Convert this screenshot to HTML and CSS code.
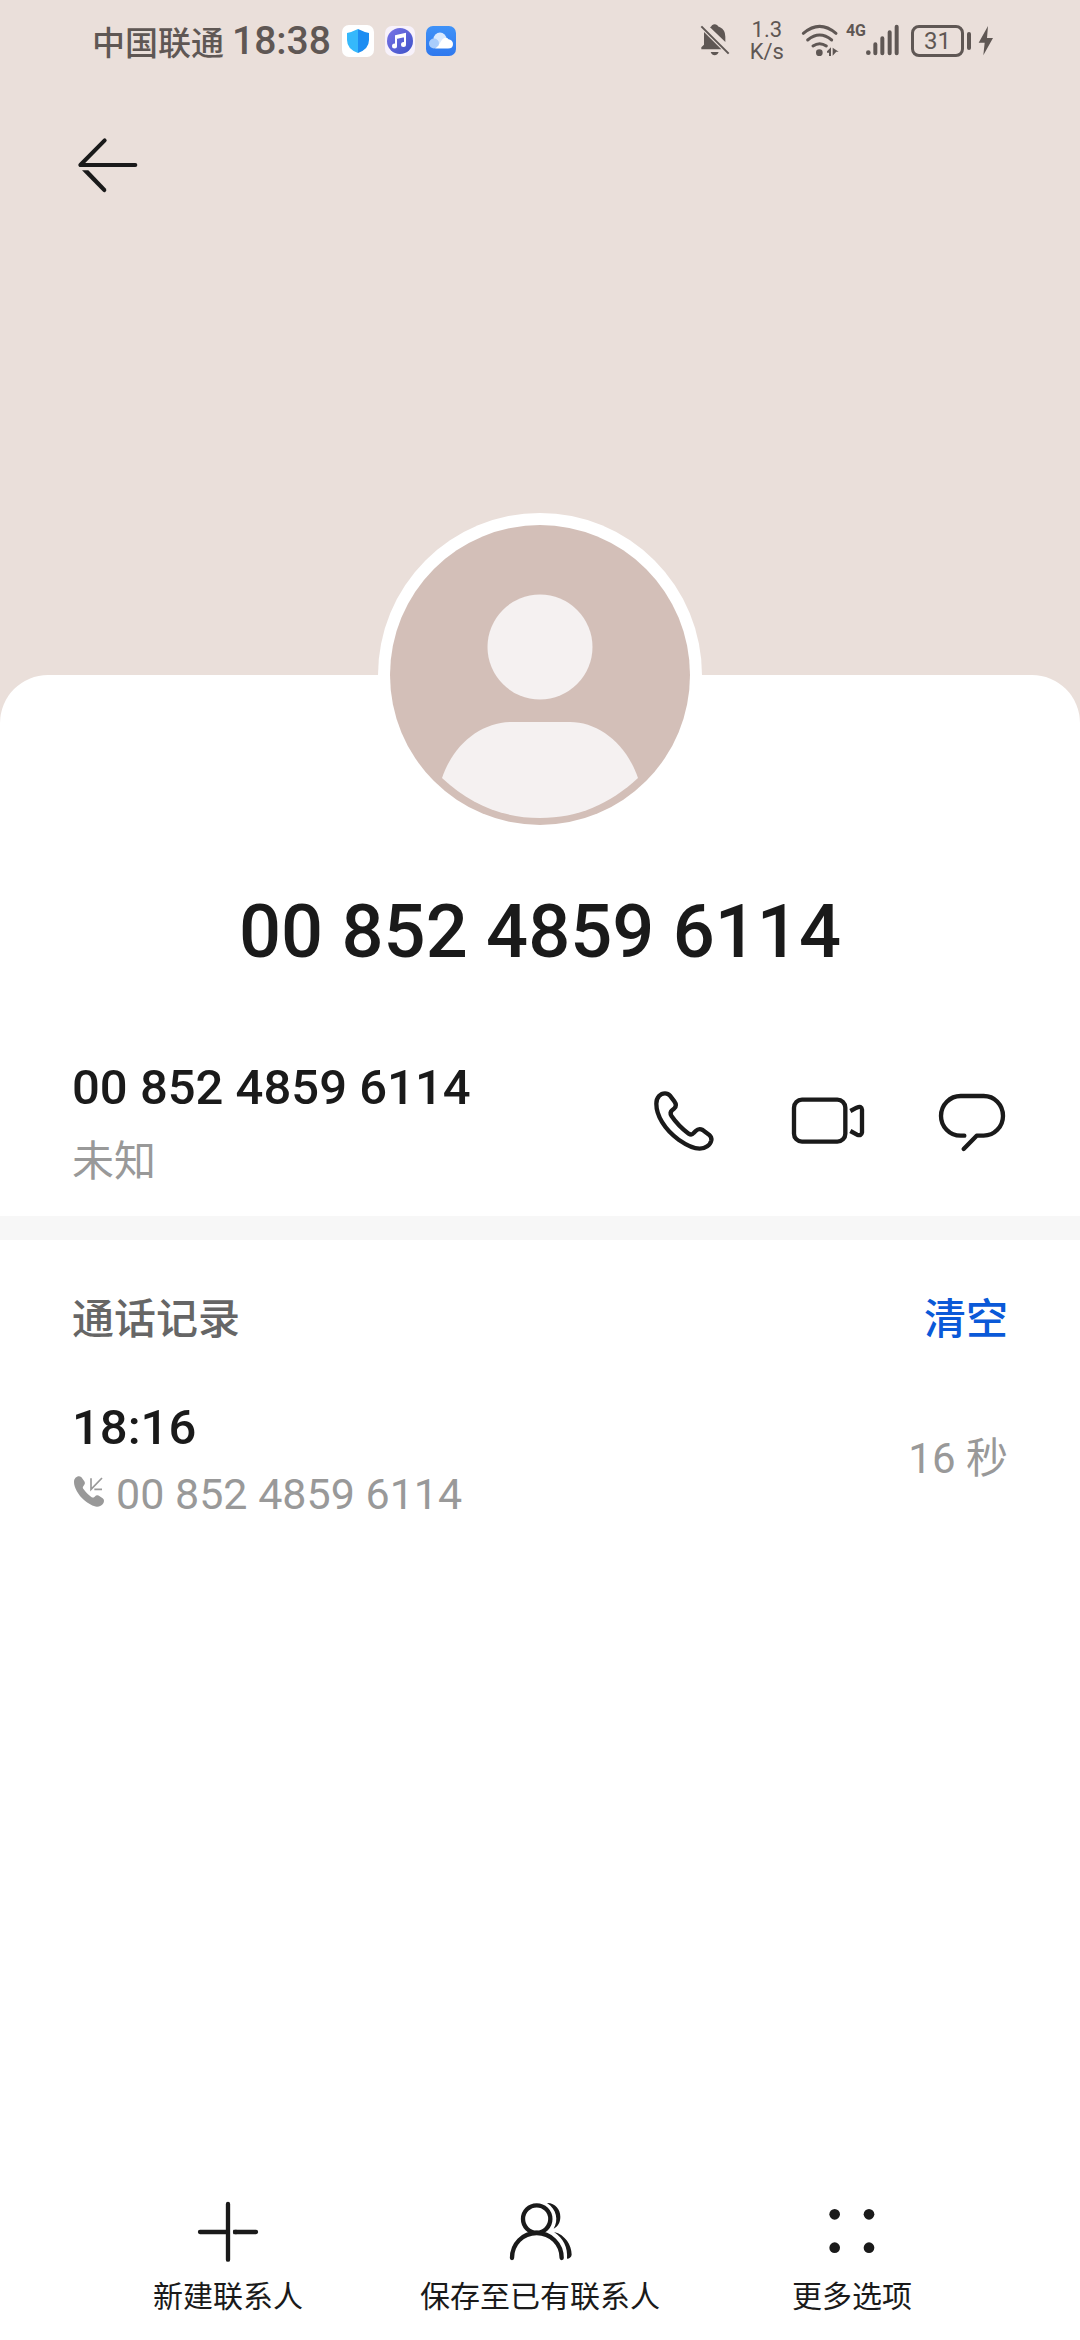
FILE: index.html
```html
<!DOCTYPE html>
<html lang="zh-CN">
<head>
<meta charset="utf-8">
<meta name="viewport" content="width=device-width, initial-scale=1">
<title>00 852 4859 6114</title>
<link rel="stylesheet" href="styles.css">
</head>
<body>
<header class="hero">
  <div class="status">
    <div class="status-left">
      <span class="carrier">中国联通</span>
      <time class="clock">18:38</time>
      <span class="apps">
        <svg width="32" height="32" viewBox="0 0 32 32" aria-hidden="true">
          <rect width="32" height="32" rx="7" fill="#fff"/>
          <path d="M16 4Q10 7 5 8V15Q5 24 16 28Z" fill="#35b8fb"/>
          <path d="M16 4Q22 7 27 8V15Q27 24 16 28Z" fill="#1d8df2"/>
        </svg>
        <svg width="30" height="30" viewBox="0 0 30 30" aria-hidden="true">
          <defs><linearGradient id="music" x1="0" y1="0" x2="1" y2="1"><stop offset="0" stop-color="#7a74e6"/><stop offset="1" stop-color="#3d52c8"/></linearGradient></defs>
          <rect width="30" height="30" rx="7" fill="#f8f2fb"/>
          <circle cx="15" cy="15" r="13" fill="url(#music)"/>
          <path d="M11 20V10L20 8V18M11 12L20 10" fill="none" stroke="#fff" stroke-width="2"/>
          <circle cx="9.500" cy="20" r="2.500" fill="#fff"/><circle cx="18.500" cy="18.500" r="2.500" fill="#fff"/>
        </svg>
        <svg width="30" height="30" viewBox="0 0 30 30" aria-hidden="true">
          <defs><linearGradient id="sky" x1="0" y1="0" x2="0" y2="1"><stop offset="0" stop-color="#3f92f8"/><stop offset="1" stop-color="#2f78ee"/></linearGradient></defs>
          <rect width="30" height="30" rx="7" fill="url(#sky)"/>
          <circle cx="14" cy="13" r="6.500" fill="#d9e9fe"/>
          <circle cx="8" cy="17.500" r="5" fill="#a9cdfc"/>
          <path d="M9 22.500Q12 21 14 17Q17 11 21 12Q22 12 22 13Q27 14 27 18Q27 22.500 22 22.500Z" fill="#fff"/>
        </svg>
      </span>
    </div>
    <div class="status-right">
      <svg class="bell" width="30" height="34" viewBox="0 0 90 102" aria-hidden="true">
        <path d="M12 24L64 76H4V70L12 62ZM30 10Q34 8 36 4Q44-3 52 4Q54 8 60 10Q76 18 76 38V54ZM32 84H56Q52 94 44 94Q36 94 32 84Z"/>
        <path d="M4 7L86 89" fill="none" stroke="currentColor" stroke-width="6"/>
      </svg>
      <span class="speed"><span>1.3</span><span>K/s</span></span>
      <svg class="wifi" width="40" height="34" viewBox="0 0 120 102" aria-hidden="true">
        <path d="M7 28Q56-14 105 28M20 48Q56 18 92 48M36 66Q56 52 76 66" fill="none" stroke="currentColor" stroke-width="9" stroke-linecap="round"/>
        <circle cx="55" cy="86" r="10"/>
        <path d="M78 82L90 70V96H84V86H78ZM95 71L113 83H106L95 95Z"/>
      </svg>
      <span class="network">4G</span>
      <svg class="signal" width="34" height="34" viewBox="0 0 102 102" aria-hidden="true">
        <circle cx="7" cy="86" r="7"/>
        <path d="M28 61V88M49 43V88M71 25V88M92 8V88" fill="none" stroke="currentColor" stroke-width="12" stroke-linecap="round"/>
      </svg>
      <span class="battery">31</span>
      <svg class="nub" width="4" height="18" viewBox="0 0 4 18" aria-hidden="true"><rect width="4" height="18" rx="2"/></svg>
      <svg class="bolt" width="16" height="30" viewBox="0 0 48 90" aria-hidden="true"><path d="M30 0L2 50H20L16 88L45 36H27Z"/></svg>
    </div>
  </div>
  <button class="back" type="button" aria-label="返回">
    <svg width="64" height="64" viewBox="48 38 192 192" aria-hidden="true">
      <path d="M134 60L61 134H226" fill="none" stroke="currentColor" stroke-width="12" stroke-linecap="round" stroke-linejoin="round"/>
      <path d="M66 150H85L138 205Q141 211 136 215Q132 217 128 213Z" fill="currentColor"/>
    </svg>
  </button>
</header>

<main class="card">
  <svg class="avatar" width="324" height="324" viewBox="0 0 324 324" aria-hidden="true">
    <circle cx="162" cy="162" r="162" fill="#fff"/>
    <circle cx="162" cy="162" r="150" fill="#d3bfb8"/>
    <circle cx="162" cy="134" r="52.500" fill="#f5f1f1"/>
    <path d="M134 209H192C220 209 248 230 260 265C232 291 200 305 162 305C124 305 92 291 64 265C76 230 104 209 134 209Z" fill="#f5f1f1"/>
  </svg>
  <h1 class="title">00 852 4859 6114</h1>

  <section class="contact">
    <div class="contact-text">
      <p class="number">00 852 4859 6114</p>
      <p class="place">未知</p>
    </div>
    <div class="actions">
      <button type="button" aria-label="呼叫">
        <svg width="64" height="64" viewBox="72 54 192 192" aria-hidden="true">
          <path class="line" d="M79 98C79 78 92 67 105 67C111 67 116 69 120 74L133 91C139 99 139 106 133 112L126 118C121 123 121 129 124 134C139 156 156 173 176 188C182 192 187 191 191 186L197 180C203 174 211 173 218 177L237 191C243 196 245 202 244 208C241 222 226 233 209 233C194 233 172 224 146 206C103 175 79 133 79 98Z"/>
        </svg>
      </button>
      <button type="button" aria-label="视频通话">
        <svg width="76" height="64" viewBox="480 54 228 192" aria-hidden="true">
          <rect class="line" x="492" y="86" width="154" height="126" rx="24"/>
          <path class="line flat" d="M661 120L680 110Q695 103 696 116V184Q694 196 681 191L661 180"/>
        </svg>
      </button>
      <button type="button" aria-label="发信息">
        <svg width="70" height="64" viewBox="924 54 210 192" aria-hidden="true">
          <path class="line" d="M1003 194H992C958 194 933 166 933 135C933 101 960 75 992 75H1061C1093 75 1119 101 1119 135C1119 167 1093 194 1061 194H1040L1001 234"/>
        </svg>
      </button>
    </div>
  </section>

  <section class="history">
    <div class="history-head">
      <h2>通话记录</h2>
      <button class="clear" type="button">清空</button>
    </div>
    <div class="call">
      <div>
        <time class="call-time">18:16</time>
        <p class="call-number">
          <svg width="32" height="32" viewBox="39 832 96 96" aria-hidden="true">
            <path d="M45 844C45 834 52 827 60 827C65 827 68 830 71 835L76 842C79 847 78 851 74 855C70 859 71 862 74 866C81 876 88 883 97 889C101 892 104 891 107 888C112 883 117 883 122 887L131 893C136 897 136 903 133 908C129 915 122 918 114 918C103 918 87 908 75 898C58 883 45 861 45 844Z" fill="currentColor"/>
            <path d="M96 833V866L129 832M106 866H129" fill="none" stroke="currentColor" stroke-width="5"/>
          </svg>
          <span>00 852 4859 6114</span>
        </p>
      </div>
      <span class="duration">16 秒</span>
    </div>
  </section>
</main>

<footer class="toolbar">
  <button type="button">
    <svg width="64" height="64" viewBox="168 60 192 192" aria-hidden="true">
      <path class="line" d="M264 72V239M180 156H264M348 156H285"/>
      <path class="line flat" d="M280 156H290"/>
    </svg>
    <span>新建联系人</span>
  </button>
  <button type="button">
    <svg width="64" height="64" viewBox="24 60 192 192" aria-hidden="true">
      <circle class="line" cx="110" cy="117" r="41"/>
      <path class="line" d="M36 234C36 192 68 159 110 159S185 192 185 234"/>
      <path d="M141 69C165 68 181 88 181 110C181 127 174 139 161 146C176 120 170 88 141 69ZM162 156C196 164 215 196 215 224Q213 235 201 236C204 204 190 174 162 156Z" fill="currentColor"/>
    </svg>
    <span>保存至已有联系人</span>
  </button>
  <button type="button">
    <svg width="64" height="64" viewBox="960 60 192 192" aria-hidden="true" fill="currentColor">
      <circle cx="1004" cy="103" r="16"/><circle cx="1107" cy="103" r="16"/>
      <circle cx="1004" cy="203" r="16"/><circle cx="1107" cy="203" r="16"/>
    </svg>
    <span>更多选项</span>
  </button>
</footer>
</body>
</html>
```
FILE: styles.css
```css
* {
  box-sizing: border-box;
}

body {
  display: flex;
  flex-direction: column;
  min-height: 100vh;
  margin: 0;
  background: #fff;
  color: #1a1a1a;
  font-family: Roboto, "Noto Sans CJK SC", sans-serif;
}

h1,
h2,
p {
  margin: 0;
}

svg {
  display: block;
  flex: none;
  overflow: visible;
}

button {
  padding: 0;
  border: 0;
  background: none;
  color: inherit;
  font: inherit;
}

.line {
  fill: none;
  stroke: currentColor;
  stroke-width: 13;
  stroke-linecap: round;
  stroke-linejoin: round;
}

.flat {
  stroke-linecap: butt;
}

/* Header */
.hero {
  min-height: 723px;
  background: #eadfda;
}

.status {
  display: flex;
  align-items: center;
  justify-content: space-between;
  height: 82px;
  padding: 0 86px 0 92px;
  color: #5f5754;
}

.status svg {
  fill: currentColor;
}

.status-left,
.status-right,
.apps {
  display: flex;
  align-items: center;
}

.carrier {
  font-size: 33px;
  font-weight: 500;
}

.clock {
  margin-left: 8px;
  font-size: 39px;
  font-weight: 500;
}

.apps {
  gap: 11px;
  margin-left: 11px;
}

.speed {
  display: flex;
  flex-direction: column;
  margin: 0 17px 0 20px;
  font-size: 22px;
  line-height: 22px;
  text-align: center;
}

.network {
  align-self: flex-start;
  margin-left: 5px;
  font-size: 16px;
  line-height: 24px;
  font-weight: 700;
}

.battery {
  width: 53px;
  height: 32px;
  margin: 0 3px 0 11px;
  border: 3px solid currentColor;
  border-radius: 8px;
  font-size: 24px;
  line-height: 27px;
  text-align: center;
}

.bolt {
  margin-left: 7px;
}

.back {
  display: block;
  margin: 51px 0 0 76px;
  color: #1a1a1a;
}

/* Contact card */
.card {
  flex: 1;
  margin-top: -48px;
  border-radius: 48px 48px 0 0;
  background: #fff;
}

.avatar {
  margin: -162px auto 0;
}

.title {
  margin-top: 47px;
  font-size: 74px;
  line-height: 96px;
  font-weight: 500;
  text-align: center;
}

.contact {
  display: flex;
  align-items: center;
  justify-content: space-between;
  padding: 72px 72px 26px;
  border-bottom: 24px solid #f7f7f7;
}

.number {
  font-size: 49px;
  line-height: 72px;
  font-weight: 500;
}

.place {
  margin-top: 10px;
  color: #999;
  font-size: 42px;
  line-height: 56px;
}

.actions {
  display: flex;
  gap: 72px;
}

/* Call history */
.history {
  padding: 52px 72px;
}

.history-head,
.call {
  display: flex;
  align-items: center;
  justify-content: space-between;
}

.history-head {
  font-size: 42px;
  line-height: 56px;
  font-weight: 500;
}

.history-head h2 {
  color: #666;
  font: inherit;
}

.clear {
  color: #0a59d8;
}

.call {
  margin-top: 48px;
}

.call-time {
  display: block;
  font-size: 49px;
  line-height: 64px;
  font-weight: 500;
}

.call-number {
  display: flex;
  align-items: center;
  gap: 12px;
  margin-top: 6px;
  color: #999;
  font-size: 43px;
  line-height: 56px;
}

.duration {
  color: #999;
  font-size: 42px;
  line-height: 56px;
}

/* Bottom toolbar */
.toolbar {
  display: grid;
  grid-template-columns: repeat(3, 1fr);
  padding: 0 72px 23px;
}

.toolbar button {
  display: flex;
  flex-direction: column;
  align-items: center;
  gap: 13px;
  font-size: 30px;
  line-height: 40px;
  white-space: nowrap;
}
```
